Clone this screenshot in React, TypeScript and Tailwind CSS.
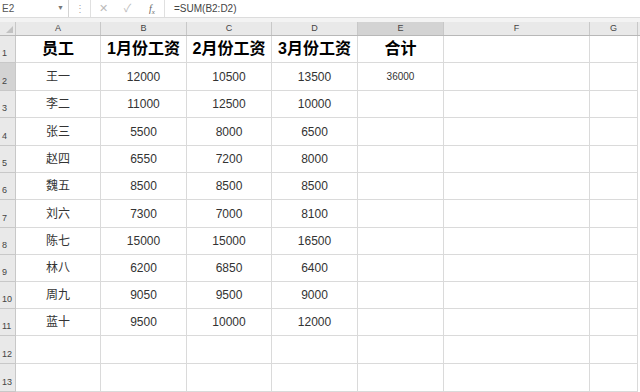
import React from "react";

const cols = [
  { name: "A", w: 85 },
  { name: "B", w: 86 },
  { name: "C", w: 85 },
  { name: "D", w: 86 },
  { name: "E", w: 86 },
  { name: "F", w: 146 },
  { name: "G", w: 48 },
];

const rowHeights = [27, 28, 27, 28, 27, 27, 28, 27, 27, 27, 27, 28, 28];

const data: string[][] = [
  ["员工", "1月份工资", "2月份工资", "3月份工资", "合计", "", ""],
  ["王一", "12000", "10500", "13500", "36000", "", ""],
  ["李二", "11000", "12500", "10000", "", "", ""],
  ["张三", "5500", "8000", "6500", "", "", ""],
  ["赵四", "6550", "7200", "8000", "", "", ""],
  ["魏五", "8500", "8500", "8500", "", "", ""],
  ["刘六", "7300", "7000", "8100", "", "", ""],
  ["陈七", "15000", "15000", "16500", "", "", ""],
  ["林八", "6200", "6850", "6400", "", "", ""],
  ["周九", "9050", "9500", "9000", "", "", ""],
  ["蓝十", "9500", "10000", "12000", "", "", ""],
  ["", "", "", "", "", "", ""],
  ["", "", "", "", "", "", ""],
];

const font = {
  fontFamily: '"Liberation Sans", "Noto Sans CJK SC", sans-serif',
};

export default function App() {
  return (
    <div className="w-[640px] h-[392px] overflow-hidden bg-white relative" style={font}>
      {/* formula bar */}
      <div className="flex h-[17px] bg-white items-stretch">
        <div className="w-[69px] border-r border-[#d4d4d4] flex items-center justify-between pl-[2px] pr-[4px]">
          <span className="text-[10px] text-[#555]">E2</span>
          <span className="text-[7px] text-[#777]">▼</span>
        </div>
        <div className="w-[21px] flex items-center justify-center text-[10px] text-[#aaa]">⋮</div>
        <div className="w-[75px] border-l border-r border-[#e0e0e0] flex items-center text-[#bbb]">
          <span className="w-[25px] text-center text-[11px]">✕</span>
          <span className="w-[25px] text-center text-[11px]">✓</span>
          <span className="w-[25px] text-center text-[10px] italic text-[#666]" style={{ fontFamily: '"Liberation Serif", serif' }}>f<sub className="text-[7px]">x</sub></span>
        </div>
        <div className="flex-1 flex items-center pl-[9px] text-[10px] text-[#444]">=SUM(B2:D2)</div>
      </div>
      <div className="h-[5px] bg-[#f3f3f3] border-t border-[#dcdcdc]" />
      {/* column header */}
      <div className="flex h-[14px] bg-[#e9e9e9] border-b border-[#b8b8b8]">
        <div className="w-[16px] border-r border-[#c8c8c8] relative">
          <div
            className="absolute right-[2px] bottom-[2px] w-0 h-0"
            style={{ borderLeft: "7px solid transparent", borderBottom: "7px solid #c2c2c2" }}
          />
        </div>
        {cols.map((c) => (
          <div
            key={c.name}
            className={
              "flex items-center justify-center border-r border-[#c8c8c8] text-[9px] text-[#444] " +
              (c.name === "E" ? "bg-[#d3d3d3]" : "")
            }
            style={{ width: c.w }}
          >
            {c.name}
          </div>
        ))}
      </div>
      {/* rows */}
      {rowHeights.map((h, r) => (
        <div key={r} className="flex" style={{ height: h }}>
          <div
            className={
              "w-[16px] border-r border-b border-[#c8c8c8] flex items-end pl-[2px] pb-[2px] text-[9px] text-[#444] " +
              (r === 1 ? "bg-[#d3d3d3]" : "bg-[#e9e9e9]")
            }
          >
            {r + 1}
          </div>
          {cols.map((c, ci) => {
            const v = data[r][ci];
            const isHeader = r === 0;
            const isSum = r === 1 && ci === 4;
            return (
              <div
                key={c.name}
                className={
                  "border-r border-b border-[#dadada] flex items-center justify-center whitespace-nowrap " +
                  (isHeader
                    ? "text-[16px] font-bold text-black"
                    : isSum
                    ? "text-[10px] text-[#333]"
                    : "text-[12px] text-[#333]")
                }
                style={{ width: c.w }}
              >
                {v}
              </div>
            );
          })}
        </div>
      ))}
    </div>
  );
}
